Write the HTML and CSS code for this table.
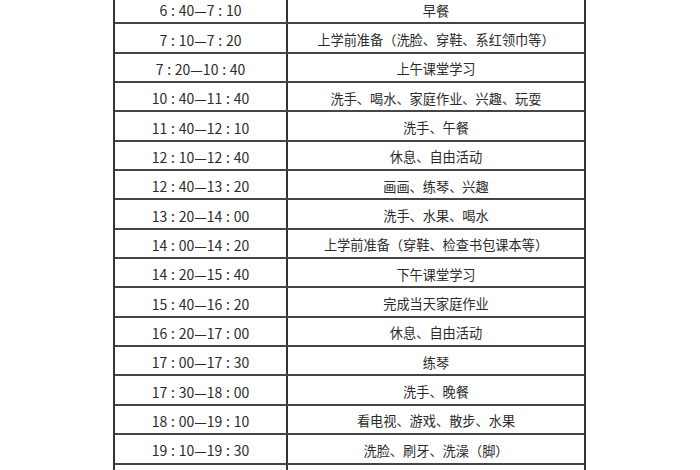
FILE: index.html
```html
<!DOCTYPE html>
<html lang="zh-CN">
<head>
<meta charset="utf-8">
<title>作息时间表</title>
<link rel="stylesheet" href="styles.css">
</head>
<body>
<div class="sheet">
  <div class="row"><div class="time">6 : 40—7 : 10</div><div class="task">早餐</div></div>
  <div class="row"><div class="time">7 : 10—7 : 20</div><div class="task">上学前准备（洗脸、穿鞋、系红领巾等）</div></div>
  <div class="row"><div class="time">7 : 20—10 : 40</div><div class="task">上午课堂学习</div></div>
  <div class="row"><div class="time">10 : 40—11 : 40</div><div class="task">洗手、喝水、家庭作业、兴趣、玩耍</div></div>
  <div class="row"><div class="time">11 : 40—12 : 10</div><div class="task">洗手、午餐</div></div>
  <div class="row"><div class="time">12 : 10—12 : 40</div><div class="task">休息、自由活动</div></div>
  <div class="row"><div class="time">12 : 40—13 : 20</div><div class="task">画画、练琴、兴趣</div></div>
  <div class="row"><div class="time">13 : 20—14 : 00</div><div class="task">洗手、水果、喝水</div></div>
  <div class="row"><div class="time">14 : 00—14 : 20</div><div class="task">上学前准备（穿鞋、检查书包课本等）</div></div>
  <div class="row"><div class="time">14 : 20—15 : 40</div><div class="task">下午课堂学习</div></div>
  <div class="row"><div class="time">15 : 40—16 : 20</div><div class="task">完成当天家庭作业</div></div>
  <div class="row"><div class="time">16 : 20—17 : 00</div><div class="task">休息、自由活动</div></div>
  <div class="row"><div class="time">17 : 00—17 : 30</div><div class="task">练琴</div></div>
  <div class="row"><div class="time">17 : 30—18 : 00</div><div class="task">洗手、晚餐</div></div>
  <div class="row"><div class="time">18 : 00—19 : 10</div><div class="task">看电视、游戏、散步、水果</div></div>
  <div class="row"><div class="time">19 : 10—19 : 30</div><div class="task">洗脸、刷牙、洗澡（脚）</div></div>
  <div class="row"><div class="time"></div><div class="task"></div></div>
</div>
</body>
</html>
```
FILE: styles.css
```css
html, body {
  margin: 0;
  padding: 0;
  background: #ffffff;
  height: 470px;
  overflow: hidden;
}
.sheet {
  width: 473px;
  margin: -5px 0 0 113px;
  border-left: 2px solid #333333;
  border-right: 2px solid #333333;
  box-sizing: border-box;
  font-family: "Noto Sans CJK SC", "Noto Sans", sans-serif;
  font-size: 13.2px;
  color: #2b2b2b;
}
.row {
  display: grid;
  grid-template-columns: 173px 1fr;
  height: 29.35px;
  border-bottom: 2px solid #454545;
  box-sizing: border-box;
}
.time, .task {
  display: flex;
  align-items: center;
  justify-content: center;
  padding-top: 3px;
  white-space: nowrap;
}
.time {
  border-right: 2px solid #333333;
  font-size: 14px;
  word-spacing: 0.6px;
}
```
